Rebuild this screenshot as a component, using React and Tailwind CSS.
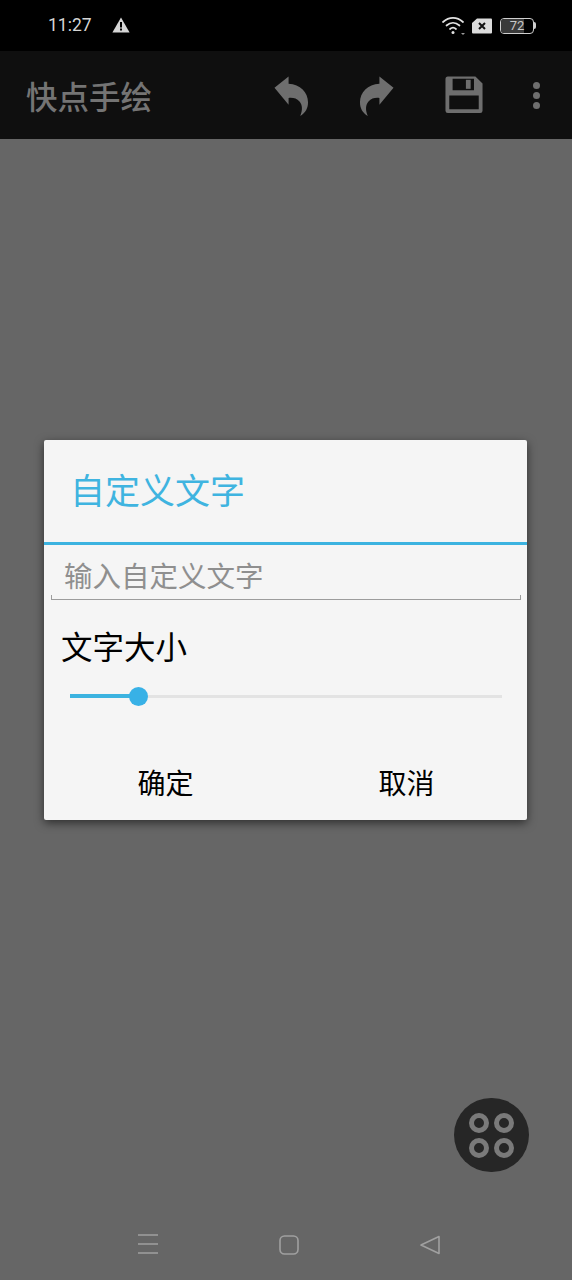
import React from "react";

const CJK = "font-['Roboto','Noto_Sans_CJK_SC',sans-serif]";

function StatusBar() {
  return (
    <div className="h-[51px] bg-black flex items-center pl-[48px] pr-[36px] text-[#d6d6d6]">
      <span className="text-[17.5px] leading-[53px] w-[41px] font-['Roboto',sans-serif]">11:27</span>
      <svg className="ml-[23px] mb-[1px]" width="18" height="16" viewBox="0 0 18 16">
        <path d="M9 0.5 L17.6 15.5 H0.4 Z" fill="#d6d6d6" />
        <rect x="8" y="5" width="2" height="5.5" fill="#000" />
        <rect x="8" y="11.5" width="2" height="2" fill="#000" />
      </svg>
      <div className="ml-auto flex items-center">
        <svg width="25" height="20" viewBox="0 0 25 20" fill="none" stroke="#e2e2e2" strokeWidth="1.7" strokeLinecap="round">
          <path d="M1 6 C7 0.5 15 0.5 21 6" />
          <path d="M4.5 9.5 C8.5 6 13.5 6 17.5 9.5" />
          <path d="M8 13 C10 11.3 12 11.3 14 13" />
          <circle cx="11" cy="16.5" r="1.5" fill="#e2e2e2" stroke="none" />
          <path d="M19 17 H23 L21 19 Z" fill="#9a9a9a" stroke="none" />
        </svg>
        <svg className="ml-[5px]" width="20" height="16" viewBox="0 0 20 16">
          <path d="M5 0.5 H19 Q20 0.5 20 1.5 V14.5 Q20 15.5 19 15.5 H1 Q0 15.5 0 14.5 V5 Z" fill="#dcdcdc" />
          <path d="M7 5 L13 11 M13 5 L7 11" stroke="#111" strokeWidth="2" />
        </svg>
        <div className="ml-[8px] relative w-[34px] h-[16px] rounded-[4px] border border-[#cfcfcf] overflow-hidden flex items-center justify-center">
          <div className="absolute left-0 top-0 bottom-0 w-[72%] bg-[#3a3a3a]" />
          <span className="relative text-[13px] leading-none text-[#c8c8c8] font-['Roboto',sans-serif]">72</span>
        </div>
        <div className="w-[2px] h-[7px] bg-[#cfcfcf] rounded-r-[2px]" />
      </div>
    </div>
  );
}

function Toolbar() {
  return (
    <div className="h-[88px] bg-[#0f0f0f] flex items-center pl-[26px]">
      <span className={`text-[31.5px] leading-none font-medium text-[#747474] pt-[7px] ${CJK}`}>快点手绘</span>
      {/* undo */}
      <svg className="absolute left-[274px] top-[76px]" width="35" height="41" viewBox="0 0 36 42">
        <path d="M0.5 12 L15 0.5 V8 C27 8.5 35 17 35 27 C35 33 32.5 38 27 41 C29.5 35 29.5 30 26 26 C23.5 23 19.5 22 15 22.5 V29.5 Z" fill="#6e6e6e" />
      </svg>
      {/* redo */}
      <svg className="absolute left-[359px] top-[76px]" width="35" height="41" viewBox="0 0 36 42">
        <path d="M35.5 12 L21 0.5 V8 C9 8.5 1 17 1 27 C1 33 3.5 38 9 41 C6.5 35 6.5 30 10 26 C12.5 23 16.5 22 21 22.5 V29.5 Z" fill="#6e6e6e" />
      </svg>
      {/* save */}
      <svg className="absolute left-[445px] top-[76px]" width="38" height="38" viewBox="0 0 40 39">
        <path fillRule="evenodd" d="M3 0 H32 L39.5 7.5 V36 Q39.5 38.5 37 38.5 H3 Q0.5 38.5 0.5 36 V3 Q0.5 0 3 0 Z M8 2.5 V14.5 H30.5 V2.5 Z M4.5 20 V34.5 H35.5 V20 Z" fill="#6e6e6e" />
        <rect x="22" y="3.5" width="5" height="9.5" fill="#6e6e6e" />
      </svg>
      {/* more */}
      <div className="absolute left-[533px] top-[82px] flex flex-col gap-[3px]">
        <div className="w-[7px] h-[7px] rounded-full bg-[#6e6e6e]" />
        <div className="w-[7px] h-[7px] rounded-full bg-[#6e6e6e]" />
        <div className="w-[7px] h-[7px] rounded-full bg-[#6e6e6e]" />
      </div>
    </div>
  );
}

function Dialog() {
  return (
    <div className={`bg-[#f5f5f5] rounded-[2px] h-[380px] flex flex-col shadow-[0_3px_10px_rgba(0,0,0,0.55)] ${CJK}`}>
      <div className="h-[100px] flex items-center pl-[26px] pt-[2px] border-b-[3px] border-[#3cb3e0] box-content">
        <span className="text-[35px] leading-none text-[#3fb4e0]">自定义文字</span>
      </div>
      <div className="ml-[7px] mr-[6px] h-[55px] flex items-center pl-[13px] pt-[12px] border-b border-x-0 border-[#9c9c9c] relative">
        <div className="absolute left-0 bottom-0 w-[1px] h-[4px] bg-[#9c9c9c]" />
        <div className="absolute right-0 bottom-0 w-[1px] h-[4px] bg-[#9c9c9c]" />
        <span className="text-[28.5px] leading-none text-[#8f8f8f]">输入自定义文字</span>
      </div>
      <div className="pl-[17px] pt-[30px] text-[31.5px] leading-[38px] text-black">文字大小</div>
      <div className="ml-[26px] mr-[25px] mt-[18px] h-[20px] flex items-center relative">
        <div className="w-[70px] h-[4px] bg-[#3cb3e0]" />
        <div className="flex-1 h-[3px] bg-[#e3e3e3]" />
        <div className="absolute left-[59px] top-[1px] w-[19px] h-[19px] rounded-full bg-[#38b1e6]" />
      </div>
      <div className="flex mt-auto h-[76px] pt-[6px] text-[28px] text-black">
        <div className="flex-1 flex items-center justify-center pl-[1px]">确定</div>
        <div className="flex-1 flex items-center justify-center">取消</div>
      </div>
    </div>
  );
}

function Fab() {
  return (
    <div className="absolute left-[454px] top-[1098px] w-[75px] h-[74px] rounded-full bg-[#262626] grid grid-cols-[20px_20px] grid-rows-[20px_20px] gap-[5px] content-center justify-center">
      {[0, 1, 2, 3].map((i) => (
        <div key={i} className="w-[20px] h-[20px] rounded-full border-[5.5px] border-[#7a7a7a]" />
      ))}
    </div>
  );
}

function NavBar() {
  return (
    <div className="h-[70px] relative">
      <svg className="absolute left-[136px] top-[23px]" width="24" height="22" viewBox="0 0 24 22" stroke="#a0a0a0" strokeWidth="1.6">
        <path d="M2 2 H22 M2 11 H22 M2 20 H22" />
      </svg>
      <svg className="absolute left-[278px] top-[24px]" width="22" height="22" viewBox="0 0 22 22" fill="none" stroke="#a0a0a0" strokeWidth="1.6">
        <rect x="2" y="2" width="18" height="18" rx="4.5" />
      </svg>
      <svg className="absolute left-[419px] top-[24px]" width="22" height="22" viewBox="0 0 22 22" fill="none" stroke="#a0a0a0" strokeWidth="1.6" strokeLinejoin="round">
        <path d="M20 2.5 V19.5 L2 11 Z" />
      </svg>
    </div>
  );
}

export default function App() {
  return (
    <div className="relative w-[572px] h-[1280px] bg-[#666666] flex flex-col overflow-hidden">
      <StatusBar />
      <Toolbar />
      <div className="flex-1 pt-[301px] pl-[44px] pr-[45px]">
        <Dialog />
      </div>
      <NavBar />
      <Fab />
    </div>
  );
}
